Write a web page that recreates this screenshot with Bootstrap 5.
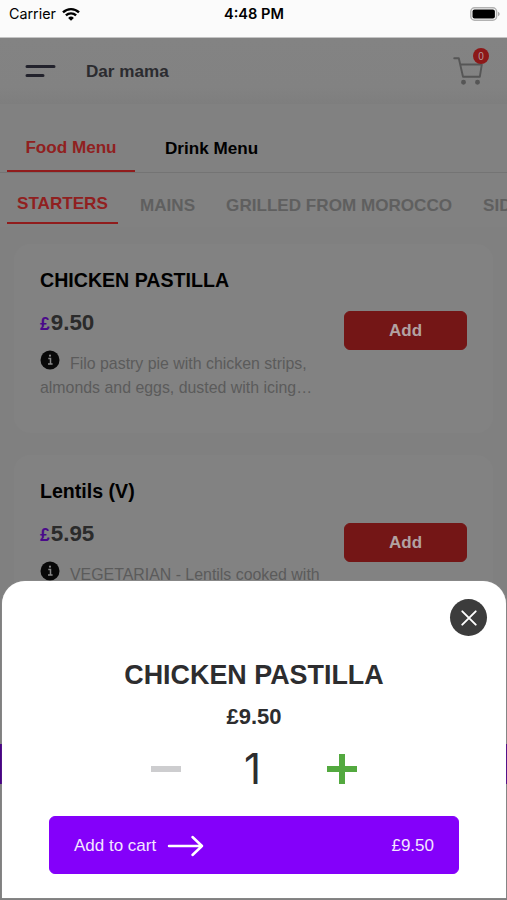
<!DOCTYPE html>
<html lang="en">
<head>
<meta charset="utf-8">
<meta name="viewport" content="width=device-width, initial-scale=1">
<title>Dar mama</title>
<link href="https://cdn.jsdelivr.net/npm/bootstrap@5.3.0/dist/css/bootstrap.min.css" rel="stylesheet">
<style>
body{font-family:"Liberation Sans",Arial,sans-serif;background:#808080;color:#000}
svg{display:block;flex:none}
.screen{height:900px}
.status{height:38px;background:#fbfbfb;font-family:Inter,sans-serif;font-size:14.3px;line-height:28px;padding:0 7px 0 9px;border-bottom:1px solid #c4c4c4}
.status-side{flex:1 1 0;height:27px}
.status-time{margin-left:-1px;font-size:14.6px}
.wifi{margin-left:-2px}
.top-head{height:66px;background:linear-gradient(#838383,#828282 75%,#7e7e7e);padding:0 18px 0 25px}
.brand-name{font-size:17.1px;color:#2b2b2f;margin-left:30px;padding-top:1px}
.cart-box{padding:0 6px 0 0}
.count-dot{left:20px;top:-9px;width:16px;height:16px;background:#8c1818;color:#b39a9a;font-size:10px}
.tabs-main{height:69px;border-bottom:1px solid #747474;background:#818181;font-size:17.1px;padding-left:7px}
.tab-item{line-height:20px}
.tab-food{width:128px;height:68px;padding-top:34px;color:#902020;border-bottom:2px solid #901c1c}
.tab-drink{padding:35px 0 0 30px}
.tabs-sub{height:54px;background:#818181;font-size:17.1px;color:#5f5f5f;padding-left:7px}
.sub-active{flex:none;height:51px;width:111px;padding:21px 0 0 10px;color:#902020;border-bottom:2px solid #901c1c}
.sub-item{padding-top:23px;flex:none}
.dish{height:189px;margin:17px 14px 22px;background:#828282;border-radius:16px;padding:24px 26px 0}
.dish-name{font-size:19.6px;line-height:24px}
.dish-price{font-size:22.4px;line-height:26px;margin-top:18px;color:#2b2b2b}
.dish-price span{font-size:17.5px;color:#4a0a8a;margin-right:1px}
.dish-text{font-size:15.9px;line-height:24px;color:#5b5b5b;width:290px;margin-top:13px}
.dish-text svg{display:inline-block;vertical-align:-1px;margin-right:10px}
.btn-dish{--bs-btn-bg:#741616;--bs-btn-color:#b2a2a2;--bs-btn-border-color:#741616;width:123px;height:39px;border-radius:6px;font-size:17px;margin-top:43px;padding:0}
.dish + .dish .btn-dish{margin-top:44px}
.base-bar{left:0;right:0;top:744px;height:40px;background:#470383}
.sheet{left:2px;right:1px;top:581px;height:317px;background:#fff;border-radius:23px 23px 0 0;padding:18px 47px 0;color:#2d2d2f;box-shadow:0 0 1px #bbb}
.close-round{--bs-btn-bg:#3c3c3c;--bs-btn-hover-bg:#222;width:37px;height:37px;margin-right:-28px}
.sheet-title{font-size:26.9px;line-height:32px;margin-top:23px}
.sheet-price{font-size:22px;line-height:26px;margin-top:13px}
.qty-row{margin-top:10px;height:58px;padding:0 102px}
.qty-num{font-family:Inter,sans-serif;font-weight:400;font-size:42px;line-height:50px;margin-right:3px}
.btn-cart{--bs-btn-bg:#8400fa;--bs-btn-color:#f3e6ff;--bs-btn-border-color:#8400fa;--bs-btn-hover-bg:#7400dc;--bs-btn-hover-color:#fff;height:58px;border-radius:6px;font-size:17px;padding:2px 24px 0;margin-top:18px}
</style>
<script src="https://cdn.jsdelivr.net/npm/bootstrap@5.3.0/dist/js/bootstrap.bundle.min.js"></script>
</head>
<body>
<div class="screen position-relative overflow-hidden">
  <div class="status d-flex">
    <div class="status-side d-flex align-items-center gap-2">
      <span>Carrier</span>
      <svg class="wifi" width="18" height="14" viewBox="0 0 18 14" fill="none" stroke="#000" stroke-width="2.4"><path d="M1 5.3a11.6 11.6 0 0 1 16 0M3.9 8.4a7.4 7.4 0 0 1 10.2 0"/><path d="M9 13.8 6.1 10.9a4.2 4.2 0 0 1 5.8 0z" fill="#000" stroke="none"/></svg>
    </div>
    <span class="status-time fw-semibold">4:48 PM</span>
    <div class="status-side d-flex align-items-center justify-content-end">
      <svg width="30" height="14" viewBox="0 0 30 14"><rect x=".8" y=".8" width="25.8" height="12.4" rx="3.8" fill="#fbfbfb" stroke="#b2b2b2" stroke-width="1.5"/><rect x="2.5" y="2.5" width="22.4" height="9" rx="2" fill="#000"/><path d="M28 4.8c2.2.8 2.2 3.6 0 4.4z" fill="#aaa"/></svg>
    </div>
  </div>

  <header class="top-head d-flex align-items-center">
    <svg width="31" height="14" viewBox="0 0 31 14" stroke="#22222c" stroke-width="3" stroke-linecap="round"><path d="M2 2.5h27M2 11.5h16"/></svg>
    <span class="brand-name fw-bold">Dar mama</span>
    <div class="cart-box ms-auto position-relative">
      <svg width="30" height="28" viewBox="0 0 30 28" fill="none" stroke="#565656" stroke-width="1.9" stroke-linecap="round" stroke-linejoin="round"><path d="M1.2 1.2h4.6l4.2 18.6h16.8L28.8 7.5H7.4"/><circle cx="10.5" cy="25.3" r="1.5" fill="#565656"/><circle cx="24.5" cy="25.3" r="1.5" fill="#565656"/></svg>
      <span class="count-dot position-absolute rounded-circle d-flex align-items-center justify-content-center">0</span>
    </div>
  </header>

  <nav class="tabs-main d-flex fw-bold">
    <div class="tab-item tab-food text-center">Food Menu</div>
    <div class="tab-item tab-drink">Drink Menu</div>
  </nav>
  <nav class="tabs-sub d-flex fw-bold text-nowrap overflow-hidden">
    <div class="tab-item sub-active">STARTERS</div>
    <div class="tab-item sub-item" style="margin-left:22px">MAINS</div>
    <div class="tab-item sub-item" style="margin-left:31px">GRILLED FROM MOROCCO</div>
    <div class="tab-item sub-item" style="margin-left:31px">SIDES</div>
  </nav>

  <main>
    <section class="dish d-flex justify-content-between align-items-start">
      <div>
        <div class="dish-name fw-bold">CHICKEN PASTILLA</div>
        <div class="dish-price fw-bold"><span>£</span>9.50</div>
        <div class="dish-text"><svg width="20" height="20" viewBox="0 0 20 20"><circle cx="10" cy="10" r="9.5" fill="#080808"/><path d="M8.3 8.6h2.2v5M8 14h4.6" stroke="#888" stroke-width="1.5" fill="none"/><circle cx="10" cy="5.7" r="1.1" fill="#888"/></svg>Filo pastry pie with chicken strips,<br>almonds and eggs, dusted with icing…</div>
      </div>
      <button class="btn btn-dish fw-bold">Add</button>
    </section>
    <section class="dish d-flex justify-content-between align-items-start">
      <div>
        <div class="dish-name fw-bold">Lentils (V)</div>
        <div class="dish-price fw-bold"><span>£</span>5.95</div>
        <div class="dish-text"><svg width="20" height="20" viewBox="0 0 20 20"><circle cx="10" cy="10" r="9.5" fill="#080808"/><path d="M8.3 8.6h2.2v5M8 14h4.6" stroke="#888" stroke-width="1.5" fill="none"/><circle cx="10" cy="5.7" r="1.1" fill="#888"/></svg>VEGETARIAN - Lentils cooked with</div>
      </div>
      <button class="btn btn-dish fw-bold">Add</button>
    </section>
  </main>

  <div class="base-bar position-absolute"></div>

  <div class="sheet position-absolute d-flex flex-column">
    <button class="btn close-round rounded-circle p-0 border-0 align-self-end d-flex align-items-center justify-content-center" aria-label="Close">
      <svg width="16" height="16" viewBox="0 0 16 16" stroke="#fff" stroke-width="1.9" stroke-linecap="round"><path d="m1.3 1.3 13.4 13.4M14.7 1.3 1.3 14.7"/></svg>
    </button>
    <div class="sheet-title fw-bold text-center">CHICKEN PASTILLA</div>
    <div class="sheet-price fw-bold text-center">£9.50</div>
    <div class="qty-row d-flex align-items-center justify-content-between">
      <svg width="30" height="30" viewBox="0 0 30 30"><path d="M0 12h30v6H0z" fill="#cdcdcf"/></svg>
      <span class="qty-num">1</span>
      <svg width="30" height="30" viewBox="0 0 30 30"><path d="M12 0h6v12h12v6H18v12h-6V18H0v-6h12z" fill="#53a93f"/></svg>
    </div>
    <button class="btn btn-cart d-flex align-items-center">
      <span>Add to cart</span>
      <svg class="ms-2" width="42" height="22" viewBox="0 0 42 22" fill="none" stroke="#fff" stroke-width="2.5" stroke-linecap="round" stroke-linejoin="round"><path d="M5 11h33M28.5 2l9.5 9-9.5 9"/></svg>
      <span class="ms-auto">£9.50</span>
    </button>
  </div>
</div>
</body>
</html>
